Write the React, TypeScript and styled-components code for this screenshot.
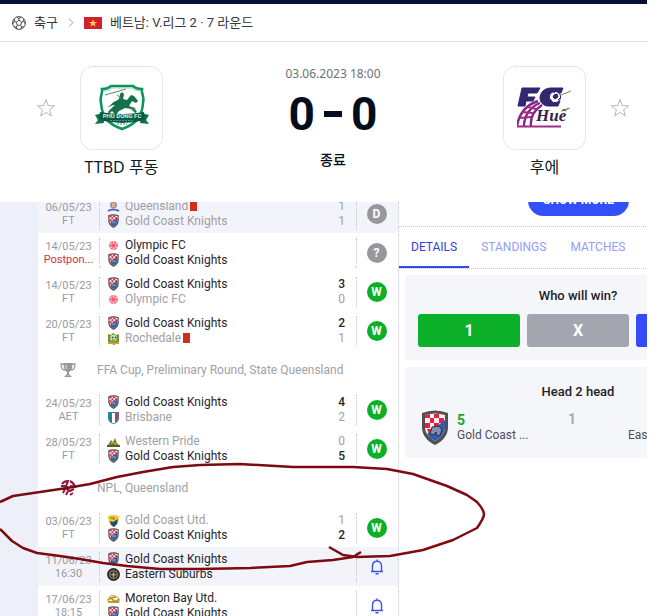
import React from "react";
import styled, { createGlobalStyle, css } from "styled-components";

const latin = `Roboto, "Liberation Sans", sans-serif`;
const korean = `"Noto Sans", "Noto Sans CJK KR", sans-serif`;

const GlobalStyle = createGlobalStyle`
  *, *::before, *::after { box-sizing: border-box; }
  body { margin: 0; background: #fff; font-family: ${latin}; }
  button { border: 0; padding: 0; background: none; font: inherit; color: inherit; cursor: pointer; }
  svg { display: block; flex: none; }
  h2 { margin: 0; }
`;

const Page = styled.main`
  position: relative;
  display: flex;
  flex-direction: column;
  height: 100vh;
  margin-right: 11px;
  overflow: hidden;
`;

const TopBar = styled.div`
  flex: none;
  height: 4px;
  background: #050e36;
`;

const Breadcrumb = styled.nav`
  display: flex;
  align-items: center;
  gap: 8px;
  flex: none;
  height: 38px;
  padding: 0 12px;
  border-bottom: 1px dotted #ccc;
  font: 400 13px/18px Roboto, "Noto Sans CJK KR", sans-serif;
  color: #35383c;
  white-space: nowrap;
`;

const Crumb = styled.a`
  display: flex;
  align-items: center;
  gap: 8px;
  color: inherit;
  text-decoration: none;
`;

const Separator = styled.span`
  padding: 0 2px;
`;

const Scoreboard = styled.header`
  display: flex;
  flex: none;
  justify-content: space-between;
  height: 160px;
  padding: 24px 17px 0 36px;
`;

const Side = styled.div<{ $away?: boolean }>`
  display: flex;
  flex-direction: ${(p) => (p.$away ? "row-reverse" : "row")};
  align-items: flex-start;
  gap: 24px;
`;

const StarButton = styled.button`
  height: 84px;
  display: grid;
  place-items: center;
`;

const Team = styled.div`
  display: flex;
  flex-direction: column;
  align-items: center;
  width: 83px;
  gap: 5px;
  font: 400 16px/24px ${korean};
  color: #0c1c28;
  white-space: nowrap;
`;

const LogoBox = styled.div`
  display: grid;
  place-items: center;
  width: 83px;
  height: 84px;
  border: 1px dotted #d2ccd4;
  border-radius: 13px;
`;

const Result = styled.div`
  display: flex;
  flex-direction: column;
  align-items: center;
`;

const KickOff = styled.time`
  font: 400 12px/16px "Noto Sans", sans-serif;
  color: #6c7175;
`;

const FinalScore = styled.div`
  display: flex;
  align-items: center;
  gap: 9px;
  height: 64px;
  font: 700 46px/64px ${latin};
  color: #020d1e;
`;

const Dash = styled.span`
  width: 18px;
  height: 6px;
  background: #020d1e;
`;

const Status = styled.div`
  margin-top: 4px;
  font: 500 14px/20px ${korean};
  color: #020d1e;
`;

const Lower = styled.div`
  display: flex;
  flex: 1;
  min-height: 0;
  overflow: hidden;
  background: #edf0f8;
`;

const MatchList = styled.section`
  flex: none;
  display: flex;
  flex-direction: column;
  width: 361px;
  margin-left: 38px;
  overflow: hidden;
  background: #fff;
  border-right: 1px dotted #c9c9d4;
`;

const Row = styled.article<{ $shade?: boolean; $cut?: boolean }>`
  display: flex;
  align-items: center;
  flex: none;
  height: 39px;
  margin-top: ${(p) => (p.$cut ? "-8px" : "0")};
  background: ${(p) => (p.$shade ? "#f3f4f9" : "#fff")};
`;

const When = styled.div`
  width: 61px;
  font-size: 11px;
  line-height: 13px;
  text-align: center;
  color: #9a9aa2;
`;

const Postponed = styled.div`
  color: #d0303a;
`;

const Teams = styled.div`
  flex: 1;
  height: 30px;
  border-left: 1px dotted #c2c2cc;
  padding: 0 11px 0 7px;
`;

const TeamLine = styled.div<{ $dim?: boolean }>`
  display: flex;
  align-items: center;
  height: 15px;
  gap: 5px;
  font-size: 12px;
  line-height: 15px;
  white-space: nowrap;
  color: ${(p) => (p.$dim ? "#a0a0a6" : "#26262b")};
`;

const Goals = styled.span<{ $dim?: boolean }>`
  margin-left: auto;
  font-weight: ${(p) => (p.$dim ? 400 : 500)};
`;

const RedCard = styled.span`
  width: 7px;
  height: 10px;
  margin-left: -3px;
  background: #d22c1c;
`;

const OutcomeCell = styled.div`
  display: grid;
  place-items: center;
  width: 42px;
  height: 30px;
  padding-right: 2px;
  border-left: 1px dotted #c2c2cc;
`;

const Outcome = styled.span<{ $win?: boolean }>`
  display: grid;
  place-items: center;
  width: 20px;
  height: 20px;
  border-radius: 50%;
  background: ${(p) => (p.$win ? "#0bb027" : "#98989c")};
  color: #fff;
  font: 700 12px/20px ${latin};
`;

const League = styled.h2`
  display: flex;
  align-items: center;
  flex: none;
  height: 40px;
  padding-left: 22px;
  gap: 21px;
  font-size: 12px;
  font-weight: 400;
  color: #a0a0a6;
`;

const Details = styled.section`
  flex: 1;
  min-width: 0;
  overflow: hidden;
  background: #fff;
`;

const DetailsInner = styled.div`
  width: 359px;
`;

const MoreBar = styled.div`
  display: flex;
  justify-content: center;
  height: 25px;
  border-bottom: 1px dotted #c4c4ce;
`;

const MoreButton = styled.button`
  width: 101px;
  height: 31px;
  margin-top: -17px;
  border-radius: 16px;
  background: #3350f8;
  color: #fff;
  font: 700 12px/31px ${latin};
`;

const Tabs = styled.div`
  display: flex;
  height: 42px;
  border-bottom: 1px dotted #c4c4ce;
`;

const Tab = styled.button<{ $active?: boolean }>`
  padding: 0 12px;
  height: 41px;
  font: 400 12px/38px ${latin};
  color: #929cfb;
  border-bottom: 2px solid transparent;
  ${(p) =>
    p.$active &&
    css`
      color: #2f40ea;
      border-color: #3349f0;
    `}
`;

const Card = styled.div<{ $roomy?: boolean }>`
  margin: 6px 7px 7px 6px;
  padding: ${(p) => (p.$roomy ? "16px" : "12px")} 13px 13px;
  border-radius: 4px;
  background: #f5f6fa;
`;

const CardTitle = styled.h2`
  font: 500 13px/18px ${latin};
  color: #222227;
  text-align: center;
`;

const Votes = styled.div`
  display: grid;
  grid-template-columns: repeat(3, 1fr);
  gap: 7px;
  margin-top: 9px;
`;

const tones = { home: "#0cb129", draw: "#a3a5af", away: "#334cf5" };

const Vote = styled.button<{ $tone: keyof typeof tones }>`
  height: 33px;
  border-radius: 3px;
  background: ${(p) => tones[p.$tone]};
  color: #fff;
  font: 700 16px/33px ${latin};
`;

const HeadToHead = styled.div`
  display: grid;
  grid-template-columns: 39px 107px 64px 1fr;
  align-items: center;
  margin-top: 9px;
  font-size: 12px;
  line-height: 15px;
  color: #505058;
`;

const Tally = styled.div<{ $win?: boolean }>`
  font-size: 14px;
  font-weight: 700;
  color: ${(p) => (p.$win ? "#0bb027" : "#a9a9b4")};
`;

const Draws = styled(Tally)`
  align-self: start;
  padding: 2px 0 0 4px;
`;

const CrestCell = styled.div`
  padding-left: 3px;
`;

const Pen = styled.svg`
  position: absolute;
  left: 0;
  top: 0;
  pointer-events: none;
`;

const BallIcon = () => (
  <svg width="14" height="14" viewBox="0 0 14 14" fill="none" stroke="#4b4d50" strokeWidth="1">
    <circle cx="7" cy="7" r="6.4" />
    <path d="M7 4.2 9.7 6.1 8.7 9.3H5.3L4.3 6.1ZM7 4.2V2.5M9.7 6.1l2-.8M8.7 9.3l1.1 1.7M5.3 9.3 4.2 11M4.3 6.1l-2-.8M4.6 1.2 7 2.5l2.4-1.3M.8 7.8 2.3 5.3 2.2 2.9M13.2 7.8l-1.5-2.5.1-2.4M2.1 10.8l2.1.2 1 2.1M11.9 10.8 9.8 11l-1 2.1" />
  </svg>
);

const Chevron = () => (
  <svg width="6" height="10" viewBox="0 0 6 10" fill="none" stroke="#999" strokeWidth="1">
    <path d="m1 .5 4 4-4 4" />
  </svg>
);

const VietnamFlag = () => (
  <svg width="18" height="12" viewBox="0 0 18 12">
    <path fill="#d3202c" d="M0 0h18v12H0z" />
    <path fill="#ffd94a" d="m9 2.200 1 2.700h3l-2.400 1.800.9 2.900L9 7.900 6.500 9.600l.9-2.900L5 4.900h3z" />
  </svg>
);

const StarIcon = () => (
  <svg width="20" height="20" viewBox="0 0 20 20" fill="none" stroke="#b4b7b9" strokeWidth="1">
    <path d="m10 1.500 2.200 6.100 6.500.2-5.100 4 1.800 6.200L10 14.400 4.600 18l1.800-6.200-5.100-4 6.500-.2z" />
  </svg>
);

const PhuDongLogo = () => (
  <svg width="56" height="48" viewBox="0 0 56 48">
    <path d="M8 5c4 0 7-1 9-3h22c2 2 5 3 9 3-1 5 3 8 1 14-1 14-7 21-21 26C14 40 8 33 7 19 5 13 9 10 8 5Z" fill="#fff" stroke="#0a955b" strokeWidth="2.600" />
    <path d="M10 7c4 0 7-1 8-3h20c2 2 4 3 8 3" fill="none" stroke="#7bc5a2" strokeWidth=".7" />
    <path d="M14 28c2-3 5-5 7-7-3 0-5 2-8 2 4-1 5-5 9-6l3-2 1-5 2-2 2 2-1 5 4 1 4-5 3 1 4 5-2 2-4-2-3 5 5 2 3 4-2 1-3-4-7-1-6 3-4 5-4 1 3-4-2-2-3 3z" fill="#147149" />
    <path d="M11 11 32 5M23 11l4 3M37 25c1-2 4-2 4 0s-3 3-4 0" fill="none" stroke="#538b73" strokeWidth="1" />
    <path d="m1 31 8-2 1 10-9 1 3-4zM55 31l-8-2-1 10 9 1-3-4z" fill="#08754b" />
    <path d="M6 28q22 4 44 0l1 8q-23 6-46 0z" fill="#075b43" />
    <text x="28" y="34" textAnchor="middle" fontFamily="Roboto" fontWeight="700" fontSize="6" fill="#d9efe3">PHU DONG FC</text>
    <path d="M16 36.500h24M23 40h10" stroke="#4c9a7b" strokeWidth="1" strokeDasharray="2 1" />
  </svg>
);

const HueLogo = () => (
  <svg width="54" height="42" viewBox="0 0 54 42">
    <path d="M5 1h18l-3 5H11l-1 4h8l-2 4H9l-1 5H1zM46 1H34c-7 0-11 5-11 10 0 4 3 8 8 8h10l2-5h-8c-3 0-4-4-2-6l3-2h8z" fill="#35276f" stroke="#35276f" strokeWidth="1" />
    <circle cx="38" cy="10" r="5.600" fill="#fff" stroke="#35276f" />
    <path d="m37 8 3-1 1 3-3 2-2-2zM33 12l2 2M41 13l2-2M36 5l2 1" fill="#35276f" stroke="#35276f" />
    <path d="M0 39C2 27 9 18 21 14M7 39c0-10 6-19 16-23M14 39c-1-8 2-15 11-21" fill="none" stroke="#872789" strokeWidth="2.400" />
    <path d="m2 31 12-1M5 25l11 1M11 20l8 2M0 39.500h44" stroke="#a22c83" strokeWidth="2" />
    <text x="19" y="34" fontFamily="Liberation Serif" fontStyle="italic" fontWeight="700" fontSize="17" fill="#302546">Huế</text>
    <path d="m44 8 10-4M45 24l8-3" stroke="#a16c52" strokeWidth="1" />
  </svg>
);

const KnightsCrest = ({ width = 13, height = 14 }: { width?: number; height?: number }) => (
  <svg width={width} height={height} viewBox="0 0 28 35">
    <path d="M1 3Q14-2 27 3v14c0 8-5 14-13 18C6 31 1 25 1 17z" fill="#51504d" />
    <path d="M4 5q10-3 20 0v12c0 6-4 11-10 14C8 28 4 23 4 17z" fill="#f7f1f1" />
    <path d="M4 5l5-1v4H4zM13 4h5v4h-5zM9 8h4v5H9zM18 8h5v5h-5zM4 13h5v5H4zM13 13h5v5h-5zM6 19h5v5H8z" fill="#e6213f" />
    <path d="M24 10v7c0 6-4 11-10 14-4-2-6-4-8-7l9-7z" fill="#315daf" />
    <path d="m11 17 7-1 3 4-2 5-3 1-1-4-3 3-3-1z" fill="#8090ac" stroke="#252f49" />
  </svg>
);

const badgeArt: Record<string, React.ReactNode> = {
  queensland: (
    <>
      <circle cx="6.500" cy="5" r="3.500" fill="#8496d8" />
      <path d="M5 3h3v4H5z" fill="#efad69" />
      <path d="M1 11q5-3 11 0" stroke="#5965b4" strokeWidth="2" fill="none" />
    </>
  ),
  olympic: (
    <>
      <circle cx="6.500" cy="6.500" r="4.500" fill="#f37b85" />
      <path d="M6.500 2v9M3 4l7 5M3 9l7-5" stroke="#fbd1d4" strokeWidth="1" />
      <circle cx="6.500" cy="6.500" r="1.800" fill="#ed5866" />
    </>
  ),
  rochedale: (
    <>
      <path d="m1 2 3 1 2-2 3 2 3-1v8l-5 3-6-3z" fill="#71903b" />
      <circle cx="6.500" cy="6" r="3.300" fill="#d3e0bc" />
      <path d="M1 9q6 3 11 0v3H1z" fill="#caa62e" />
      <path d="M5 5h1v1H5zM8 5h1v1H8zM5 8h3" stroke="#355d32" fill="#355d32" strokeWidth=".8" />
    </>
  ),
  brisbane: (
    <>
      <path d="M1 1h11v7q-1 4-5.500 5Q2 12 1 8z" fill="#327fbd" />
      <path d="M2 2h3v9L2 8z" fill="#159557" />
      <path d="M5 2h3v10H5z" fill="#fff" />
      <path d="M8 2h3v6l-3 3z" fill="#df3042" />
    </>
  ),
  western: (
    <>
      <path d="m1 10 3-5 2 2 2-4 2 5 2 2z" fill="#78822c" />
      <path d="M0 11h13" stroke="#595e2b" strokeWidth="2" />
      <path d="m4 8 2-1 2 2 2-1" stroke="#ddb931" fill="none" />
    </>
  ),
  utd: (
    <>
      <path d="M1 2q5-2 11 0l-1 7-4.500 4L2 9z" fill="#f0c735" />
      <path d="m3 7 3 1 5-3-1 5-3 3-3-2z" fill="#274b68" />
      <path d="M3 4h5l-2 2" stroke="#7d7038" fill="none" />
    </>
  ),
  eastern: (
    <>
      <circle cx="6.500" cy="6.500" r="6.500" fill="#322d2d" />
      <circle cx="6.500" cy="6.500" r="4" fill="none" stroke="#a48b5a" />
      <path d="m6.500 3 1 3 3 .5-3 1-1 3-1-3-3-1 3-.5z" fill="#b59e72" />
    </>
  ),
  moreton: (
    <>
      <path d="M1 10c0-6 4-8 7-6 4 1 5 4 4 6z" fill="#fcf2c6" stroke="#c6a139" />
      <path d="M1 8q3-3 5 0t6-1M3 6l6-1M1 10h11" fill="none" stroke="#af8f34" strokeWidth="1.500" />
    </>
  ),
};

const Badge = ({ club }: { club: string }) =>
  club === "knights" ? (
    <KnightsCrest />
  ) : (
    <svg width="13" height="13" viewBox="0 0 13 13">
      {badgeArt[club]}
    </svg>
  );

const BellIcon = () => (
  <svg width="14" height="16" viewBox="0 0 14 16" fill="none" stroke="#3d50ee" strokeWidth="1.400">
    <path d="M1 12.500h12M2.500 12.500V7c0-3 1.800-4.800 4.500-4.800S11.500 4 11.500 7v5.500M7 .5v1.700M5.500 14.800h3" />
  </svg>
);

const TrophyIcon = () => (
  <svg width="16" height="16" viewBox="0 0 16 16">
    <path d="M4 2H1c0 4 1 6 4 6M12 2h3c0 4-1 6-4 6" fill="none" stroke="#9b9ba3" strokeWidth="1.300" />
    <path d="M3.500 1h9c0 5-1 8-3.500 9v2l3 3H4l3-3v-2C4.500 9 3.500 6 3.500 1Z" fill="#9797a0" />
    <path d="M6 3v4M8 13v1" stroke="#e1e1e6" />
  </svg>
);

const NplIcon = () => (
  <svg width="16" height="16" viewBox="0 0 16 16" fill="none" stroke="#8e1746" strokeWidth="2">
    <path d="M2 4q2-3 6-3l-2 5H1M10 1q4 2 5 6l-5-1M1 9h4l-2 4M7 6v3l3 2 4-2M6 15l2-4M10 15l3-2" />
  </svg>
);

type Club = { name: string; club: string; goals?: number; dim?: boolean; red?: boolean };
type Fixture = { date: string; note: string; home: Club; away: Club; mark: "W" | "D" | "?" | "bell"; shade?: boolean; cut?: boolean };

const knights = (goals?: number, dim?: boolean): Club => ({ name: "Gold Coast Knights", club: "knights", goals, dim });

const early: Fixture[] = [
  { date: "06/05/23", note: "FT", home: { name: "Queensland", club: "queensland", goals: 1, dim: true, red: true }, away: knights(1, true), mark: "D", shade: true, cut: true },
  { date: "14/05/23", note: "Postpon...", home: { name: "Olympic FC", club: "olympic" }, away: knights(), mark: "?" },
  { date: "14/05/23", note: "FT", home: knights(3), away: { name: "Olympic FC", club: "olympic", goals: 0, dim: true }, mark: "W" },
  { date: "20/05/23", note: "FT", home: knights(2), away: { name: "Rochedale", club: "rochedale", goals: 1, dim: true, red: true }, mark: "W" },
];

const cup: Fixture[] = [
  { date: "24/05/23", note: "AET", home: knights(4), away: { name: "Brisbane", club: "brisbane", goals: 2, dim: true }, mark: "W" },
  { date: "28/05/23", note: "FT", home: { name: "Western Pride", club: "western", goals: 0, dim: true }, away: knights(5), mark: "W" },
];

const npl: Fixture[] = [
  { date: "03/06/23", note: "FT", home: { name: "Gold Coast Utd.", club: "utd", goals: 1, dim: true }, away: knights(2), mark: "W" },
  { date: "11/06/23", note: "16:30", home: knights(), away: { name: "Eastern Suburbs", club: "eastern" }, mark: "bell", shade: true },
  { date: "17/06/23", note: "18:15", home: { name: "Moreton Bay Utd.", club: "moreton" }, away: knights(), mark: "bell" },
];

const ClubLine = ({ name, club, goals, dim, red }: Club) => (
  <TeamLine $dim={dim}>
    <Badge club={club} />
    {name}
    {red && <RedCard />}
    {goals !== undefined && <Goals $dim={dim}>{goals}</Goals>}
  </TeamLine>
);

const FixtureRow = ({ date, note, home, away, mark, shade, cut }: Fixture) => (
  <Row $shade={shade} $cut={cut}>
    <When>
      {date}
      {note.startsWith("Post") ? <Postponed>{note}</Postponed> : <div>{note}</div>}
    </When>
    <Teams>
      <ClubLine {...home} />
      <ClubLine {...away} />
    </Teams>
    <OutcomeCell>
      {mark === "bell" ? (
        <button aria-label="Notify me">
          <BellIcon />
        </button>
      ) : (
        <Outcome $win={mark === "W"}>{mark}</Outcome>
      )}
    </OutcomeCell>
  </Row>
);

const rows = (list: Fixture[]) => list.map((f, i) => <FixtureRow key={i} {...f} />);

export default function App() {
  return (
    <>
      <GlobalStyle />
      <Page>
        <TopBar />
        <Breadcrumb>
          <Crumb href="#soccer">
            <BallIcon />
            축구
          </Crumb>
          <Separator>
            <Chevron />
          </Separator>
          <Crumb href="#league">
            <VietnamFlag />
            베트남: V.리그 2 · 7 라운드
          </Crumb>
        </Breadcrumb>
        <Scoreboard>
          <Side>
            <StarButton aria-label="Follow home team">
              <StarIcon />
            </StarButton>
            <Team>
              <LogoBox>
                <PhuDongLogo />
              </LogoBox>
              TTBD 푸동
            </Team>
          </Side>
          <Result>
            <KickOff>03.06.2023 18:00</KickOff>
            <FinalScore>
              <span>0</span>
              <Dash />
              <span>0</span>
            </FinalScore>
            <Status>종료</Status>
          </Result>
          <Side $away>
            <StarButton aria-label="Follow away team">
              <StarIcon />
            </StarButton>
            <Team>
              <LogoBox>
                <HueLogo />
              </LogoBox>
              후에
            </Team>
          </Side>
        </Scoreboard>
        <Lower>
          <MatchList>
            {rows(early)}
            <League>
              <TrophyIcon />
              FFA Cup, Preliminary Round, State Queensland
            </League>
            {rows(cup)}
            <League>
              <NplIcon />
              NPL, Queensland
            </League>
            {rows(npl)}
          </MatchList>
          <Details>
            <DetailsInner>
              <MoreBar>
                <MoreButton>SHOW MORE</MoreButton>
              </MoreBar>
              <Tabs role="tablist">
                <Tab role="tab" aria-selected $active>
                  DETAILS
                </Tab>
                <Tab role="tab">STANDINGS</Tab>
                <Tab role="tab">MATCHES</Tab>
              </Tabs>
              <Card>
                <CardTitle>Who will win?</CardTitle>
                <Votes>
                  <Vote $tone="home">1</Vote>
                  <Vote $tone="draw">X</Vote>
                  <Vote $tone="away" aria-label="2" />
                </Votes>
              </Card>
              <Card $roomy>
                <CardTitle>Head 2 head</CardTitle>
                <HeadToHead>
                  <CrestCell>
                    <KnightsCrest width={28} height={35} />
                  </CrestCell>
                  <div>
                    <Tally $win>5</Tally>
                    Gold Coast ...
                  </div>
                  <Draws>1</Draws>
                  <div>
                    <Tally>&nbsp;</Tally>
                    East
                  </div>
                </HeadToHead>
              </Card>
            </DetailsInner>
          </Details>
        </Lower>
        <Pen width="500" height="616" viewBox="0 0 500 616" fill="none" stroke="#7d0a10" strokeWidth="2.500" strokeLinejoin="round" aria-hidden>
          <path d="M0 502 13 496 40 492 67 488 90 484 117 477 143 472 173 467 200 465 240 464 293 467 353 467 387 469 413 474 447 486 467 495 477 502Q484 510 484 514T477 528L453 540 423 550 390 556 357 557 343 555 329 547" />
          <path d="M0 529 12 541 23 548 37 553 60 556 80 559 103 563 127 566 160 569 200 569 250 568 290 566 307 562 333 560 353 557 361 552" />
        </Pen>
      </Page>
    </>
  );
}
